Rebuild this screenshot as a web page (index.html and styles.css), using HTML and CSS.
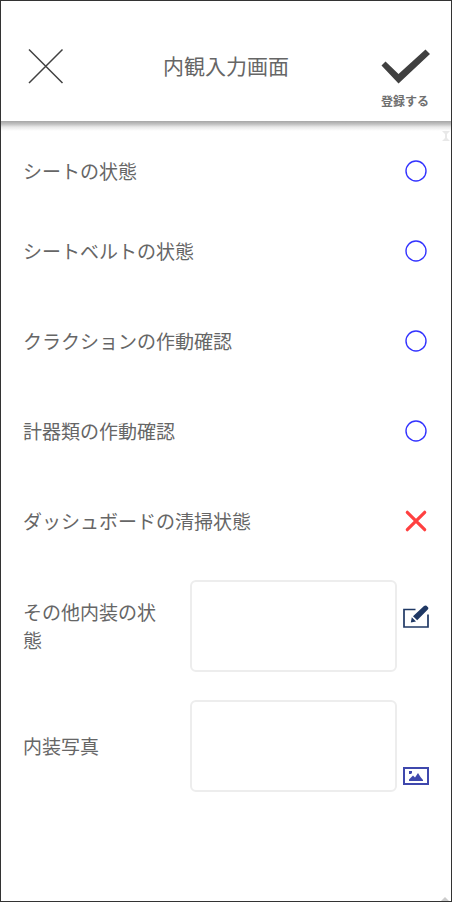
FILE: index.html
```html
<!DOCTYPE html>
<html lang="ja">
<head>
<meta charset="utf-8">
<title>内観入力画面</title>
<link rel="stylesheet" href="styles.css">
</head>
<body>
<div class="screen">
  <header class="header">
    <svg class="close" width="36" height="36" viewBox="0 0 36 36"><path d="M1 1.500 34.500 35M34.500 1.500 1 35"/></svg>
    <h1 class="title">内観入力画面</h1>
    <div class="submit">
      <svg class="check" width="50" height="36" viewBox="0 0 50 36"><path d="M0.500 17.500 4.500 13.500 17.500 26 44.500 1.500 49 6 17.500 35.500Z"/></svg>
      <span class="submit-label">登録する</span>
    </div>
  </header>
  <main class="list">
    <svg class="scroll-mark top-mark" width="8" height="10" viewBox="0 0 8 10"><path d="M0 0H8L5 3V7L8 10H0L3 7V3Z"/></svg>
    <div class="row first"><span class="label">シートの状態</span><svg class="mark ok" viewBox="0 0 24 24"><circle cx="12" cy="12" r="10"/></svg></div>
    <div class="row"><span class="label">シートベルトの状態</span><svg class="mark ok" viewBox="0 0 24 24"><circle cx="12" cy="12" r="10"/></svg></div>
    <div class="row"><span class="label">クラクションの作動確認</span><svg class="mark ok" viewBox="0 0 24 24"><circle cx="12" cy="12" r="10"/></svg></div>
    <div class="row"><span class="label">計器類の作動確認</span><svg class="mark ok" viewBox="0 0 24 24"><circle cx="12" cy="12" r="10"/></svg></div>
    <div class="row"><span class="label">ダッシュボードの清掃状態</span><svg class="mark ng" viewBox="0 0 24 24"><path d="M3.300 3.300 20.700 20.700M20.700 3.300 3.300 20.700"/></svg></div>
    <div class="row field">
      <span class="label narrow">その他内装の状態</span>
      <div class="box"></div>
      <svg class="edit" width="26" height="24" viewBox="0 0 26 24">
        <path class="edit-frame" d="M12.500 4.500H1V22H25V9.500"/>
        <path class="edit-pen" d="M7.800 17.500 8.800 12.300 13 16.500ZM10 11.200 21 .9Q22.500 0 23.500 .8L25.200 2.500Q25.800 3.300 24.800 4.500L14.200 15.200Z"/>
      </svg>
    </div>
    <div class="row field">
      <span class="label narrow">内装写真</span>
      <div class="box"></div>
      <svg class="photo" width="26" height="18" viewBox="0 0 26 18">
        <rect class="photo-frame" x="1" y="1" width="24" height="16"/>
        <path class="photo-fill" d="M6 4H9V6L8 7H6ZM6 14V12.500L10 8.500 12 10.500 15 6 17.500 10 20 13V14Z"/>
      </svg>
    </div>
    <svg class="scroll-mark bottom-mark" width="8" height="4" viewBox="0 0 8 4"><path d="M4 0 8 4H0Z"/></svg>
  </main>
</div>
</body>
</html>
```
FILE: styles.css
```css
* { box-sizing: border-box; }
body {
  margin: 0;
  background: #fff;
  color: #666;
  font-family: "Noto Sans CJK JP", sans-serif;
}
.screen {
  display: flex;
  flex-direction: column;
  width: 452px;
  height: 902px;
  border: 1px solid #333;
  overflow: hidden;
}
.header {
  display: grid;
  grid-template-columns: 80px 1fr 80px;
  flex: none;
  height: 120px;
  padding-top: 47px;
}
.close {
  margin-left: 27px;
  fill: none;
  stroke: #404040;
  stroke-width: 1.5;
}
.title {
  margin: 2px 0 0;
  font-size: 21px;
  font-weight: 400;
  line-height: 30px;
  text-align: center;
}
.submit {
  display: flex;
  flex-direction: column;
  align-items: flex-start;
  padding-left: 10px;
}
.check { fill: #404040; }
.submit-label {
  margin-top: 8px;
  font-size: 12px;
  font-weight: 700;
  line-height: 18px;
  color: #707070;
}
.list {
  position: relative;
  flex: 1;
  padding: 15px 23px 0 22px;
  background: linear-gradient(#a6a6a6, #c0c0c0 3px, #e8e8e8 6px, #fff 10px);
}
.row {
  display: flex;
  align-items: center;
  justify-content: space-between;
  height: 90px;
}
.row.first { height: 70px; }
.label {
  font-size: 19px;
  line-height: 28px;
}
.mark {
  width: 24px;
  height: 24px;
  fill: none;
}
.ok { stroke: #33f; stroke-width: 1.4; }
.ng { stroke: #ff4040; stroke-width: 3.2; stroke-linecap: round; }
.row.field {
  justify-content: flex-start;
  height: 120px;
  margin-right: -2px;
}
.narrow {
  width: 140px;
  margin-right: 27px;
}
.box {
  width: 207px;
  height: 92px;
  border: 2px solid #ededed;
  border-radius: 6px;
}
.edit, .photo {
  flex: none;
  margin-left: 6px;
}
.edit { margin-bottom: 18px; }
.photo { margin-top: 60px; }
.edit-frame { fill: none; stroke: #1f3864; stroke-width: 1.700; }
.edit-pen { fill: #1f3864; }
.photo-frame { fill: none; stroke: #3f48ad; stroke-width: 2; }
.photo-fill { fill: #3f48ad; }
.scroll-mark { position: absolute; fill: #e8e8e8; }
.top-mark { top: 10px; right: 1px; }
.bottom-mark { bottom: 0; right: 2px; fill: #ccc; }
```
